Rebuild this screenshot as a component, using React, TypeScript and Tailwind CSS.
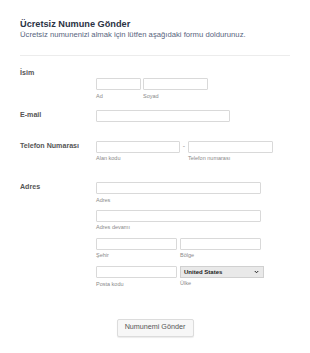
import React from "react";

function Sub({ children }: { children: React.ReactNode }) {
  return <div className="text-[5.5px] leading-[8px] mt-[1.5px] text-[#8a8a8a] whitespace-nowrap">{children}</div>;
}

function Input({ w }: { w: string }) {
  return <div className={`${w} h-[12px] border border-[#d9d9d9] rounded-[1px] bg-white box-border`} />;
}

function Field({ w, label }: { w: string; label: string }) {
  return (
    <div className="flex flex-col">
      <Input w={w} />
      <Sub>{label}</Sub>
    </div>
  );
}

function Label({ children, cls }: { children: React.ReactNode; cls?: string }) {
  return (
    <div className="w-[76px] shrink-0">
      <div className={`text-[7.1px] leading-[10px] font-bold text-[#555] whitespace-nowrap ${cls ?? ""}`}>{children}</div>
    </div>
  );
}

export default function App() {
  return (
    <div className="w-[310px] h-[353px] bg-white font-['Liberation_Sans',Arial,sans-serif] px-[20px] pt-[19px] box-border">
      <div className="text-[9.2px] leading-[11px] font-bold text-[#2c3345]">Ücretsiz Numune Gönder</div>
      <div className="text-[7.7px] leading-[10px] text-[#57647e] whitespace-nowrap">
        Ücretsiz numunenizi almak için lütfen aşağıdaki formu doldurunuz.
      </div>
      <div className="mt-[15px] border-t border-[#ececec]" />

      {/* İsim */}
      <div className="flex mt-[22px]">
        <Label cls="-mt-[10px]">İsim</Label>
        <div className="flex gap-[2px]">
          <Field w="w-[45px]" label="Ad" />
          <Field w="w-[65px]" label="Soyad" />
        </div>
      </div>

      {/* E-mail */}
      <div className="flex mt-[10px]">
        <Label>E-mail</Label>
        <Input w="w-[134px]" />
      </div>

      {/* Telefon */}
      <div className="flex mt-[19px]">
        <Label>Telefon Numarası</Label>
        <div className="flex">
          <Field w="w-[84px]" label="Alan kodu" />
          <div className="w-[8px] h-[12px] flex items-center justify-center text-[7px] text-[#999]">-</div>
          <Field w="w-[85px]" label="Telefon numarası" />
        </div>
      </div>

      {/* Adres */}
      <div className="flex mt-[20px]">
        <Label>Adres</Label>
        <div className="flex flex-col">
          <Field w="w-[165px]" label="Adres" />
          <div className="mt-[6px]">
            <Field w="w-[165px]" label="Adres devamı" />
          </div>
          <div className="flex gap-[3px] mt-[6.5px]">
            <Field w="w-[81px]" label="Şehir" />
            <Field w="w-[81px]" label="Bölge" />
          </div>
          <div className="flex gap-[3px] mt-[7px]">
            <Field w="w-[81px]" label="Posta kodu" />
            <div className="flex flex-col">
              <div className="w-[84px] h-[11.5px] border border-[#d0d0d0] bg-[#e9e9e9] box-border flex items-center justify-between pl-[3px] pr-[4px]">
                <span className="text-[6px] font-bold text-[#222] leading-none">United States</span>
                <svg width="5" height="4" viewBox="0 0 10 8">
                  <path d="M1.5 2 L5 5.5 L8.5 2" fill="none" stroke="#222" strokeWidth="2" />
                </svg>
              </div>
              <div className="text-[5.5px] leading-[8px] mt-[1px] text-[#8a8a8a]">Ülke</div>
            </div>
          </div>
        </div>
      </div>

      <div className="flex justify-center mt-[31px]">
        <div className="w-[77px] h-[18px] border border-[#dcdcdc] rounded-[2px] bg-[#f7f7f7] shadow-[0_1px_1px_rgba(0,0,0,0.08)] flex items-center justify-center text-[7.2px] text-[#555] box-border">
          Numunemi Gönder
        </div>
      </div>
    </div>
  );
}
